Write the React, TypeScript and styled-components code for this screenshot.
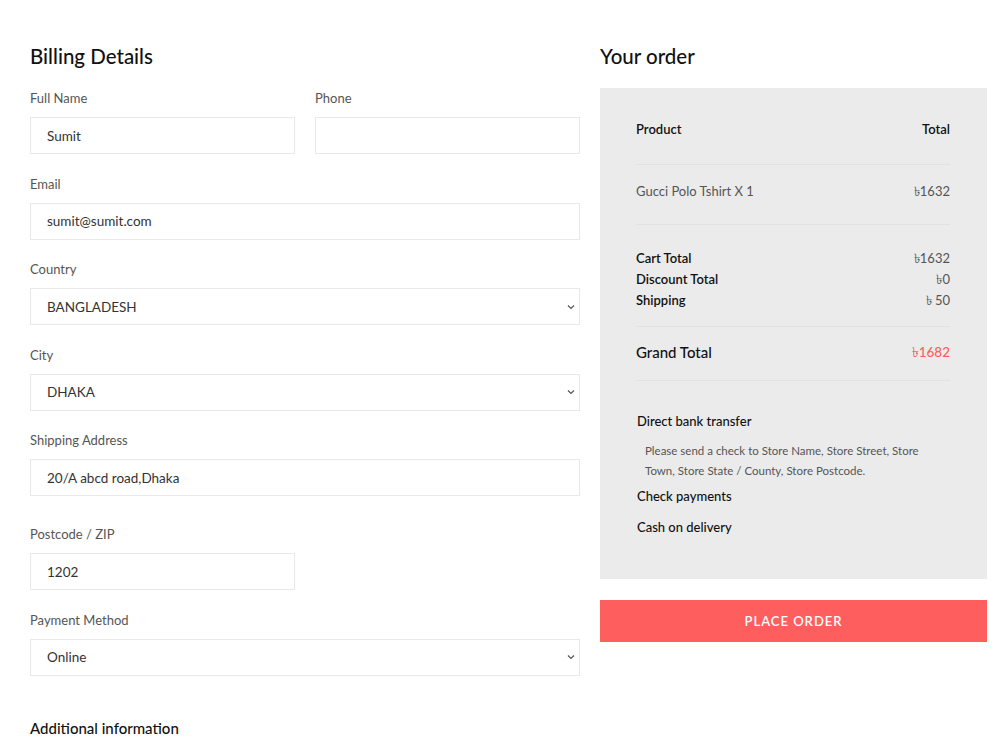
import React from 'react';
import styled, { createGlobalStyle } from 'styled-components';

const GlobalStyle = createGlobalStyle`
    html, body {
        margin: 0;
        padding: 0;
        background: #fff;
    }
    body {
        font-family: 'Lato', 'Noto Sans', 'DejaVu Sans', sans-serif;
        color: #222;
    }
    * {
        box-sizing: border-box;
    }
`;

const TAKA = '\u09F3';

const summaryRows = [
    { label: 'Cart Total', value: `${TAKA}1632` },
    { label: 'Discount Total', value: `${TAKA}0` },
    { label: 'Shipping', value: `${TAKA} 50` },
];

const Chevron: React.FC = () => (
    <svg width="8" height="6" viewBox="0 0 8 6" fill="none">
        <path d="M1 1.5L4 4.5L7 1.5" stroke="#555" strokeWidth="1.2" />
    </svg>
);

const Field: React.FC<{ label: string; value?: string; select?: boolean; extra?: boolean }> = ({
    label,
    value,
    select,
    extra,
}) => (
    <FieldGroup extra={extra}>
        <Label>{label}</Label>
        <InputBox>
            <span>{value}</span>
            {select && <Chevron />}
        </InputBox>
    </FieldGroup>
);

export default function App() {
    return (
        <>
            <GlobalStyle />
            <Page>
                <Billing>
                    <Heading>Billing Details</Heading>
                    <TwoCol>
                        <Field label="Full Name" value="Sumit" />
                        <Field label="Phone" />
                    </TwoCol>
                    <Field label="Email" value="sumit@sumit.com" />
                    <Field label="Country" value="BANGLADESH" select />
                    <Field label="City" value="DHAKA" select />
                    <Field label="Shipping Address" value="20/A abcd road,Dhaka" extra />
                    <TwoCol>
                        <Field label="Postcode / ZIP" value="1202" />
                        <div />
                    </TwoCol>
                    <Field label="Payment Method" value="Online" select />
                    <SubHeading>Additional information</SubHeading>
                </Billing>
                <Order>
                    <Heading>Your order</Heading>
                    <OrderBox>
                        <Row bold>
                            <span>Product</span>
                            <span>Total</span>
                        </Row>
                        <Divider />
                        <Row>
                            <span>Gucci Polo Tshirt X 1</span>
                            <span>{TAKA}1632</span>
                        </Row>
                        <Divider />
                        <Summary>
                            {summaryRows.map((r) => (
                                <SummaryRow key={r.label}>
                                    <span>{r.label}</span>
                                    <span>{r.value}</span>
                                </SummaryRow>
                            ))}
                        </Summary>
                        <Divider />
                        <GrandRow>
                            <span>Grand Total</span>
                            <GrandValue>{TAKA}1682</GrandValue>
                        </GrandRow>
                        <Divider />
                        <Payments>
                            <PayTitle>Direct bank transfer</PayTitle>
                            <PayNote>
                                Please send a check to Store Name, Store Street, Store Town, Store State / County,
                                Store Postcode.
                            </PayNote>
                            <PayTitle>Check payments</PayTitle>
                            <PayTitle spaced>Cash on delivery</PayTitle>
                        </Payments>
                    </OrderBox>
                    <PlaceOrder>PLACE ORDER</PlaceOrder>
                </Order>
            </Page>
        </>
    );
}

const Page = styled.div`
    display: grid;
    grid-template-columns: 550px 387px;
    column-gap: 20px;
    padding: 41px 0 0 30px;
    height: 750px;
    overflow: hidden;
`;
const Billing = styled.div`
    display: flex;
    flex-direction: column;
`;
const Heading = styled.h3`
    margin: 0 0 17px;
    font-size: 20.5px;
    line-height: 30px;
    font-weight: 500;
    color: #111;
`;
const TwoCol = styled.div`
    display: grid;
    grid-template-columns: 1fr 1fr;
    column-gap: 20px;
`;
const FieldGroup = styled.div<{ extra?: boolean }>`
    display: flex;
    flex-direction: column;
    margin-bottom: ${(p) => (p.extra ? 28 : 19.5)}px;
`;
const Label = styled.label`
    font-size: 13px;
    line-height: 20px;
    color: #555;
    margin-bottom: 9px;
`;
const InputBox = styled.div`
    display: flex;
    align-items: center;
    justify-content: space-between;
    height: 37px;
    padding: 0 4px 0 16px;
    border: 1px solid #e8e8e8;
    background: #fff;
    font-size: 13.5px;
    color: #333;
`;
const SubHeading = styled.h4`
    margin: 22px 0 0;
    font-size: 15px;
    line-height: 22px;
    font-weight: 500;
    color: #111;
`;
const Order = styled.div`
    display: flex;
    flex-direction: column;
`;
const OrderBox = styled.div`
    background: #ebebeb;
    padding: 30px 37px 40px 36px;
    height: 491px;
`;
const Row = styled.div<{ bold?: boolean }>`
    display: flex;
    justify-content: space-between;
    font-size: 13px;
    line-height: 22px;
    padding-top: ${(p) => (p.bold ? '0' : '15px')};
    padding-bottom: ${(p) => (p.bold ? '24px' : '22px')};
    font-weight: ${(p) => (p.bold ? 600 : 400)};
    color: ${(p) => (p.bold ? '#111' : '#555')};
`;
const Divider = styled.div`
    height: 1px;
    background: #e2e2e2;
`;
const Summary = styled.div`
    padding: 23px 0 15px;
`;
const SummaryRow = styled.div`
    display: flex;
    justify-content: space-between;
    font-size: 13px;
    line-height: 21px;
    font-weight: 600;
    color: #111;
    span:last-child {
        font-weight: 400;
        color: #555;
    }
`;
const GrandRow = styled.div`
    display: flex;
    justify-content: space-between;
    align-items: center;
    padding: 14px 0 17px;
    font-size: 15px;
    line-height: 22px;
    font-weight: 500;
    color: #111;
`;
const GrandValue = styled.span`
    font-size: 13.5px;
    color: #ff5e5e;
`;
const Payments = styled.div`
    padding-top: 29px;
`;
const PayTitle = styled.div<{ spaced?: boolean }>`
    font-size: 13px;
    line-height: 22px;
    font-weight: 500;
    color: #111;
    padding-left: 1px;
    margin-top: ${(p) => (p.spaced ? '9px' : '0')};
`;
const PayNote = styled.p`
    margin: 9px 0 4px;
    padding: 0 20px 0 9px;
    font-size: 11.5px;
    line-height: 20px;
    color: #555;
`;
const PlaceOrder = styled.button`
    margin-top: 21px;
    height: 42px;
    border: none;
    background: #ff5e5e;
    color: #fff;
    font-family: inherit;
    font-size: 13px;
    font-weight: 600;
    letter-spacing: 1px;
    cursor: pointer;
`;
